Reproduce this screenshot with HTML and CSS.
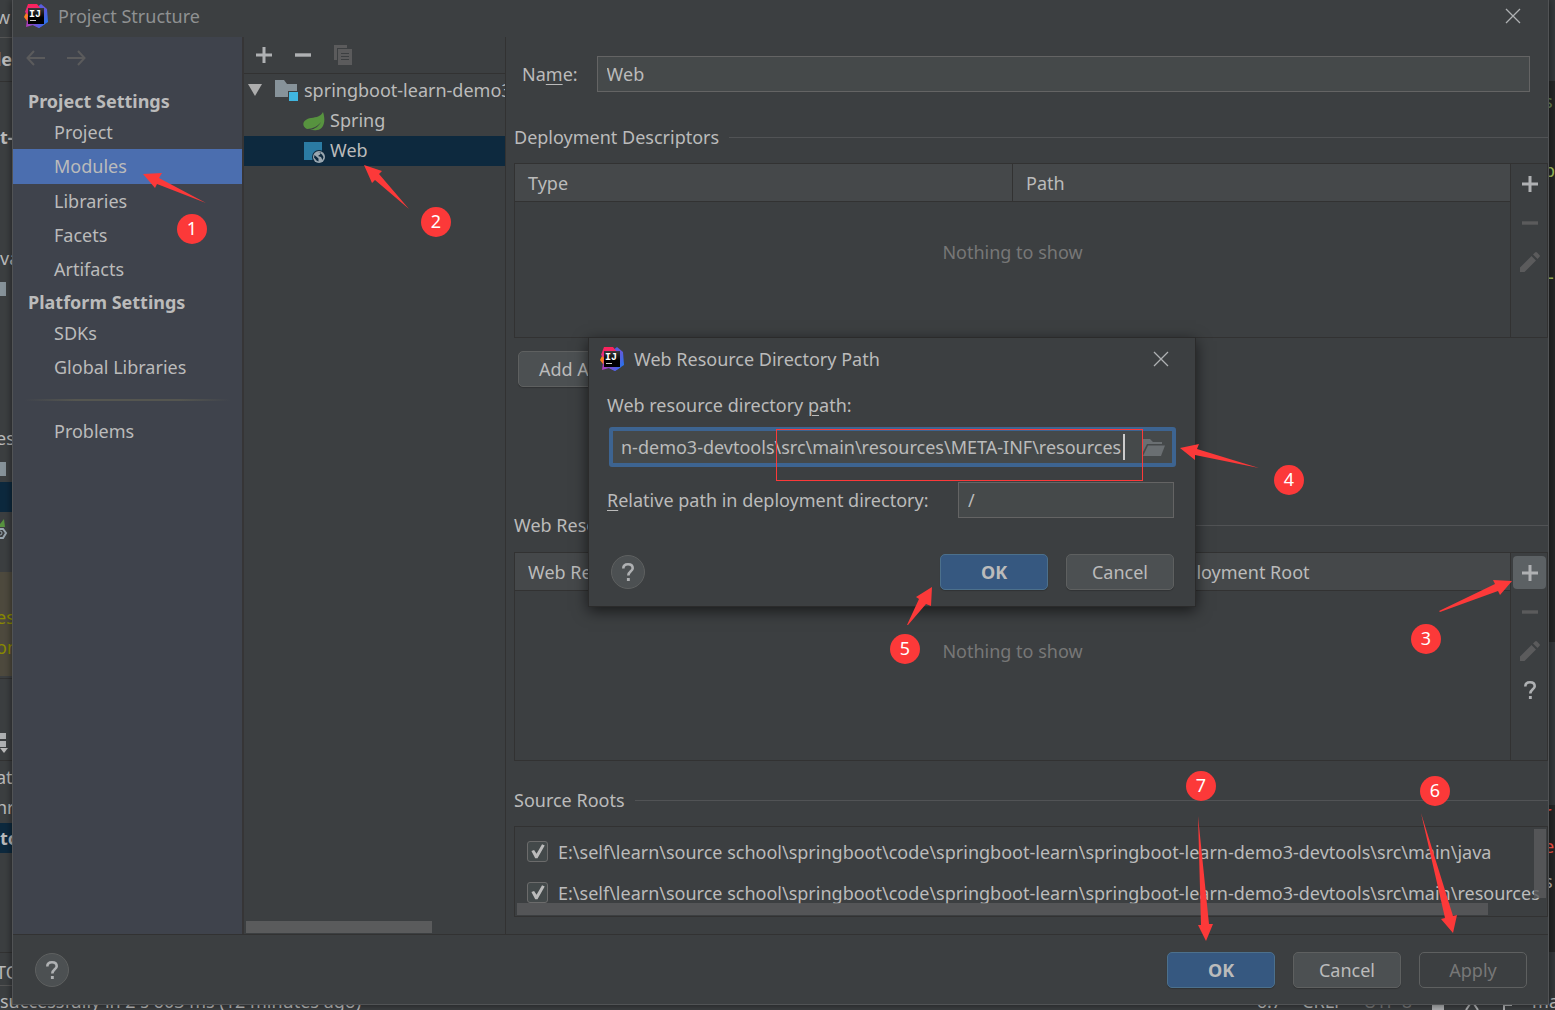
FILE: index.html
```html
<!DOCTYPE html>
<html lang="en">
<head>
<meta charset="utf-8">
<title>Project Structure</title>
<link rel="stylesheet" href="styles.css">
</head>
<body>
<svg class="defs" aria-hidden="true">
  <linearGradient id="g-pink" x1="0" y1="0" x2="0" y2="1"><stop offset="0" stop-color="#ff2157"/><stop offset="1" stop-color="#c23aa8"/></linearGradient>
  <linearGradient id="g-blue" x1="0" y1="0" x2="1" y2="1"><stop offset="0" stop-color="#2f6bf0"/><stop offset=".45" stop-color="#6a57d8"/><stop offset="1" stop-color="#127cf3"/></linearGradient>
  <linearGradient id="g-low" x1="0" y1="0" x2="1" y2="0"><stop offset="0" stop-color="#b33ab5"/><stop offset="1" stop-color="#2c6bf2"/></linearGradient>
  <linearGradient id="g-face" x1="0" y1="0" x2="0" y2="1"><stop offset="0" stop-color="#3a3a3c"/><stop offset=".6" stop-color="#000"/></linearGradient>
  <symbol id="logo" viewBox="0 0 24 24">
    <path fill="url(#g-blue)" d="M12 4 17 0l6 5 1 13-9 6-6-3z"/>
    <path fill="url(#g-low)" d="M3 16 2 23l7-2 6 3 6-4-6-4z"/>
    <path fill="#fc801d" d="M2 9 0 13l3 4 4-1V8z"/>
    <path fill="url(#g-pink)" d="M4 0h9l4 5-6 5-8 7 1-6-3-3z"/>
    <path fill="url(#g-face)" d="M4 4h16v16H4z"/>
    <text x="5" y="13" class="logo-text">IJ</text>
    <path fill="#ccc" d="M6 16h6v1H6z"/>
  </symbol>
  <symbol id="plus" viewBox="0 0 16 16"><path fill="currentColor" d="M6.500 0h3v6.500H16v3H9.500V16h-3V9.500H0v-3h6.500z"/></symbol>
  <symbol id="minus" viewBox="0 0 16 16"><path fill="currentColor" d="M0 6.300h16v3.400H0z"/></symbol>
  <symbol id="pencil" viewBox="0 0 20 20"><path fill="currentColor" d="M0 15.500 11.500 4l4.500 4.500L4.500 20H0zM13 2.500 15 .6q1-1 2 0L19.400 3q1 1 0 2l-1.900 2z"/></symbol>
  <symbol id="close" viewBox="0 0 16 16"><path fill="none" stroke="currentColor" stroke-width="1.300" d="m1 1 14 14M15 1 1 15"/></symbol>
  <symbol id="question" viewBox="0 0 12 18"><path fill="none" stroke="currentColor" stroke-width="2.600" d="M1.300 5.500C1.300 2.700 3.200 1.300 6 1.300s4.700 1.500 4.700 3.900C10.700 8.300 6.300 8.300 6.300 12.500"/><path fill="currentColor" d="M4.900 15h2.900v3H4.900z"/></symbol>
</svg>

<div class="ide" aria-hidden="true">
  <div class="edge edge-left">
    <i class="rule r37"></i><i class="rule r81"></i><i class="rule r678"></i><i class="rule r760"></i><i class="rule r952"></i><i class="rule r985"></i>
    <i class="sel s482"></i><i class="warn"></i><i class="sel s823"></i>
    <i class="chip c282"></i><i class="chip c462"></i><i class="chip c733"></i><i class="chip c742"></i>
    <svg class="bean" viewBox="0 0 8 22"><path fill="#57933f" d="M0 5 4 0l1 8H0z"/><path fill="none" stroke="#9aa7b0" stroke-width="2" d="M0 10h3l3 4-3 5H0"/><circle cx="0" cy="14" r="2" fill="none" stroke="#9aa7b0"/></svg>
    <svg class="caret-down" viewBox="0 0 8 5"><path fill="#bbb" d="M0 0h8L4 5z"/></svg>
    <span class="t t5">w</span><span class="t t47"><b>le</b></span><span class="t in t126"><b>t-</b></span><span class="t in t246">va</span><span class="t t426">esc</span>
    <span class="t t605 olive">es</span><span class="t t635 olive">on</span><span class="t t765">at</span><span class="t t795">nr</span><span class="t in t826"><b>to</b></span><span class="t t960">TO</span>
  </div>
  <div class="edge edge-right">
    <i class="editor e81"></i><i class="editor e805"></i>
    <span class="t t90 green">s</span><span class="t t158 lime">p</span><span class="t t260 lime">L</span>
    <span class="t t800 red">r</span><span class="t t834 red">e</span><span class="t t869">s</span>
  </div>
  <div class="status">
    <span class="msg">successfully in 2 s 603 ms (12 minutes ago)</span>
    <span>6:7</span><span>CRLF</span><span class="dim">UTF-8</span>
    <svg width="12" height="18" viewBox="0 0 12 18"><path fill="#afb1b3" d="M0 8h12v10H0z"/></svg>
    <svg width="16" height="18" viewBox="0 0 16 18"><path fill="none" stroke="#afb1b3" stroke-width="2" d="M2 18 6 12h4l4 6M4 8h8"/></svg>
    <svg width="12" height="18" viewBox="0 0 12 18"><path fill="none" stroke="#afb1b3" stroke-width="2" d="M4 18V4M4 13h8"/></svg>
    <span>ma</span>
  </div>
</div>

<main class="window">
  <header class="titlebar">
    <svg class="logo"><use href="#logo"/></svg>
    <h1>Project Structure</h1>
    <button class="close" aria-label="Close"><svg><use href="#close"/></svg></button>
  </header>

  <div class="panes">
    <aside class="sidebar">
      <nav class="history">
        <button aria-label="Back" disabled><svg viewBox="0 0 20 16"><path d="M19 8H2M8 1 1.500 8 8 15"/></svg></button>
        <button aria-label="Forward" disabled><svg viewBox="0 0 20 16"><path d="M1 8h17M12 1l6.500 7L12 15"/></svg></button>
      </nav>
      <nav class="sections">
        <h2>Project Settings</h2>
        <a href="#project">Project</a>
        <a href="#modules" class="current">Modules</a>
        <a href="#libraries">Libraries</a>
        <a href="#facets">Facets</a>
        <a href="#artifacts">Artifacts</a>
        <h2>Platform Settings</h2>
        <a href="#sdks">SDKs</a>
        <a href="#global">Global Libraries</a>
        <hr>
        <a href="#problems">Problems</a>
      </nav>
    </aside>

    <section class="modules">
      <div class="toolbar">
        <button aria-label="Add"><svg class="i16"><use href="#plus"/></svg></button>
        <button aria-label="Remove"><svg class="i16"><use href="#minus"/></svg></button>
        <button aria-label="Copy" disabled><svg class="copy" viewBox="0 0 18 20"><path fill="currentColor" d="M0 0h13v3H3v12H0z"/><path fill="currentColor" d="M4 4h14v16H4z"/><path stroke="#3c3f41" d="M7 8.500h8M7 11.500h8M7 14.500h8"/></svg></button>
      </div>
      <ul class="tree">
        <li class="root"><svg class="twisty" viewBox="0 0 14 12"><path fill="#adadad" d="M0 0h14L7 12z"/></svg><svg class="folder" viewBox="0 0 24 22"><path fill="#87939a" d="M0 1h9l3 4h10v7h-9v6H0z"/><path fill="#40b6e0" d="M14 13h9v9h-9z"/></svg>springboot-learn-demo3-devtools</li>
        <li><svg class="facet" viewBox="0 0 22 20"><path fill="#57933f" d="M20 0c3 9 1 17-6 18-2 .5-5 0-7 0 5-1 9-4 11-8-3 4-8 7-14 7C-3 13 1 7 8 6c6-1 9-1 12-6z"/></svg>Spring</li>
        <li class="selected"><svg class="facet" viewBox="0 0 22 22"><path fill="#2b7ba3" d="M1 1h18v18H1z"/><circle cx="16" cy="16" r="7" fill="#0d293e"/><circle cx="16" cy="16" r="6" fill="#9aa7b0"/><path fill="#0d293e" d="m11.500 14 4 3.500v3l-2-1-2.500-3zM15 12l3-.5-1 2-2 1.500 3 1 1.500 3 1-3-1.500-2.500L17 12z"/></svg>Web</li>
      </ul>
      <i class="thumb"></i>
    </section>

    <section class="detail">
      <div class="name">
        <label for="name">Na<u>m</u>e:</label>
        <input id="name" value="Web">
      </div>

      <h3 class="group">Deployment Descriptors</h3>
      <div class="grid descriptors">
        <table>
          <thead><tr><th>Type</th><th>Path</th></tr></thead>
          <tbody><tr><td colspan="2">Nothing to show</td></tr></tbody>
        </table>
        <div class="tools">
          <button aria-label="Add"><svg class="i16"><use href="#plus"/></svg></button>
          <button aria-label="Remove" disabled><svg class="i16"><use href="#minus"/></svg></button>
          <button aria-label="Edit" disabled><svg class="i20"><use href="#pencil"/></svg></button>
        </div>
      </div>
      <button class="btn wide">Add Application Server specific descriptor...</button>

      <h3 class="group resources-title">Web Resource Directories</h3>
      <div class="grid resources">
        <table>
          <thead><tr><th>Web Resource Directory</th><th>Path Relative to Deployment Root</th></tr></thead>
          <tbody><tr><td colspan="2">Nothing to show</td></tr></tbody>
        </table>
        <div class="tools">
          <button class="hover" aria-label="Add"><svg class="i16"><use href="#plus"/></svg></button>
          <button aria-label="Remove" disabled><svg class="i16"><use href="#minus"/></svg></button>
          <button aria-label="Edit" disabled><svg class="i20"><use href="#pencil"/></svg></button>
          <button aria-label="Help"><svg class="q"><use href="#question"/></svg></button>
        </div>
      </div>

      <h3 class="group roots-title">Source Roots</h3>
      <div class="roots">
        <label><input type="checkbox" checked>E:\self\learn\source school\springboot\code\springboot-learn\springboot-learn-demo3-devtools\src\main\java</label>
        <label><input type="checkbox" checked>E:\self\learn\source school\springboot\code\springboot-learn\springboot-learn-demo3-devtools\src\main\resources</label>
        <i class="vthumb"></i><i class="hthumb"></i>
      </div>
    </section>
  </div>

  <footer class="actions">
    <button class="help" aria-label="Help"><svg class="q"><use href="#question"/></svg></button>
    <button class="btn primary">OK</button>
    <button class="btn">Cancel</button>
    <button class="btn" disabled>Apply</button>
  </footer>
</main>

<div class="dialog" role="dialog" aria-labelledby="dlg-title">
  <header>
    <svg class="logo"><use href="#logo"/></svg>
    <h2 id="dlg-title">Web Resource Directory Path</h2>
    <button class="close" aria-label="Close"><svg><use href="#close"/></svg></button>
  </header>
  <label class="path-label" for="path">Web resource directory <u>p</u>ath:</label>
  <div class="path">
    <input id="path" value="n-demo3-devtools\src\main\resources\META-INF\resources"><i class="caret"></i>
    <button aria-label="Browse"><svg viewBox="0 0 22 17"><path fill="#6a6f72" d="M0 0h7l3 3h9v2H4L0 13z"/><path fill="#6a6f72" d="M5 6.500h17L18 17H0z"/></svg></button>
  </div>
  <div class="relative">
    <label for="rel"><u>R</u>elative path in deployment directory:</label>
    <input id="rel" value="/">
  </div>
  <footer>
    <button class="help" aria-label="Help"><svg class="q"><use href="#question"/></svg></button>
    <button class="btn primary">OK</button>
    <button class="btn">Cancel</button>
  </footer>
</div>

<div class="notes">
  <svg class="arrows">
    <rect x="776.500" y="429.500" width="366" height="51"/>
    <path d="m143 174 19-1-3 5 47 25-49-19-2 4z"/>
    <path d="m364 165 18 6-3 3 30 35-34-29-3 3z"/>
    <path d="m1512 581-19-1 2 4-56 27 1 1 58-21 2 4z"/>
    <path d="m1180 448 19-4-2 5 62 19-64-13v5z"/>
    <path d="m932 587-16 10 3 2-12 26h1l18-21 5 2z"/>
    <path d="m1453 933-12-14 4-1-24-105 32 103 4-1z"/>
    <path d="m1206 941-8-16h3l-3-109 11 108h4z"/>
  </svg>
  <span class="n1">1</span><span class="n2">2</span><span class="n3">3</span><span class="n4">4</span><span class="n5">5</span><span class="n6">6</span><span class="n7">7</span>
</div>
</body>
</html>
```
FILE: styles.css
```css
* { box-sizing: border-box; }

body {
  margin: 0;
  position: relative;
  min-height: 100vh;
  display: flex;
  overflow: hidden;
  background: #3c3f41;
  color: #bbb;
  font: 18px/24px "Noto Sans", "Noto Sans CJK SC", sans-serif;
}

h1, h2, h3, ul { margin: 0; padding: 0; font: inherit; list-style: none; }
button, input { font: inherit; color: inherit; margin: 0; }
button { padding: 0; border: 0; background: none; }
svg { display: block; flex: none; }
i { display: block; }
u { text-decoration-thickness: 1px; text-underline-offset: 3px; }
.defs { position: absolute; width: 0; height: 0; }
.logo { width: 24px; height: 24px; }
.logo-text { font: bold 10px "Liberation Mono", monospace; fill: #fff; }
.i16 { width: 16px; height: 16px; }
.i20 { width: 20px; height: 20px; }
.q { width: 12px; height: 18px; }

/* IDE frame that shows around the window */
.ide { position: absolute; inset: 0; }
.edge { position: absolute; top: 0; bottom: 0; overflow: hidden; }
.edge-left { left: 0; width: 13px; }
.edge-right { right: 0; width: 7px; background: #36393b; }
.edge i, .edge .t, .edge svg { position: absolute; left: 0; }
.edge .t { left: -4px; white-space: nowrap; }
.edge .in { left: 0; }
.rule { width: 100%; height: 1px; background: #555; }
.sel { width: 100%; height: 30px; background: #0d293e; }
.chip { width: 6px; height: 14px; background: #87939a; }
.warn { top: 572px; width: 100%; height: 104px; background: #4e4a3e; }
.bean { top: 519px; width: 8px; height: 22px; }
.caret-down { top: 748px; width: 8px; height: 5px; }
.editor { width: 100%; background: #262727; }
.e81 { top: 81px; height: 561px; }
.e805 { top: 805px; height: 147px; }
.r37 { top: 37px; } .r81 { top: 81px; background: #323232; } .r678 { top: 678px; background: #323232; }
.r760 { top: 760px; background: #323232; } .r952 { top: 952px; background: #323232; } .r985 { top: 985px; }
.s482 { top: 482px; } .s823 { top: 823px; }
.c282 { top: 282px; } .c462 { top: 462px; }
.c733 { top: 733px; height: 6px; background: #afb1b3; } .c742 { top: 741px; height: 6px; background: #afb1b3; }
.t5 { top: 5px; } .t47 { top: 47px; } .t126 { top: 125px; } .t246 { top: 246px; } .t426 { top: 426px; }
.t605 { top: 605px; } .t635 { top: 635px; } .t765 { top: 765px; } .t795 { top: 795px; } .t826 { top: 826px; } .t960 { top: 960px; }
.t90 { top: 89px; } .t158 { top: 158px; } .t260 { top: 260px; } .t800 { top: 800px; } .t834 { top: 834px; } .t869 { top: 869px; }
.olive { color: #8a8a00; } .green { color: #6a8759; } .lime { color: #a5c261; } .red { color: #ff5647; }
.status {
  position: absolute; left: 0; right: -4px; bottom: -3px;
  display: flex; align-items: center; gap: 20px; white-space: nowrap; overflow: hidden;
}
.status .msg { flex: 1; }
.dim { color: #777; }

/* Main window */
.window {
  position: relative;
  flex: 1;
  min-width: 0;
  margin: 0 6px 5px 12px;
  display: flex;
  flex-direction: column;
  background: #3c3f41;
  border: solid #515355;
  border-width: 0 1px 1px;
  box-shadow: 0 0 8px #0008;
}
.titlebar { display: flex; align-items: center; gap: 10px; height: 37px; padding: 0 25px 5px 11px; color: #8f9192; }
.titlebar h1 { flex: 1; }
.close { width: 20px; height: 20px; display: grid; place-items: center; color: #afb1b3; }
.close svg { width: 16px; height: 16px; }
.panes { flex: 1; display: flex; min-height: 0; }

.sidebar { width: 231px; background: #3f434c; border-right: 2px solid #363536; }
.history { display: flex; gap: 20px; height: 42px; padding-left: 13px; align-items: center; }
.history svg { width: 20px; height: 16px; fill: none; stroke: #5b5b5c; stroke-width: 2; }
.sections { padding-top: 6px; }
.sections h2 { height: 30px; padding: 4px 15px; font-weight: bold; }
.sections a { display: block; height: 34px; padding: 5px 41px; color: inherit; text-decoration: none; }
.sections a.current { height: 35px; background: #4b6eaf; }
.sections hr { height: 2px; margin: 15px 11px 13px; border: 0; background: linear-gradient(90deg, transparent, #555650 25%, #555650 75%, transparent); }

.modules { width: 262px; border-right: 1px solid #323232; display: flex; flex-direction: column; overflow: hidden; }
.toolbar { display: flex; align-items: center; gap: 23px; height: 37px; padding-left: 12px; border-bottom: 1px solid #323232; color: #afb1b3; }
button:disabled { color: #5b5b5c; }
.copy { width: 18px; height: 20px; }
.tree { flex: 1; padding-top: 2px; white-space: nowrap; }
.tree li { display: flex; align-items: center; gap: 5px; height: 30px; padding: 0 0 2px 59px; }
.tree .root { padding-left: 4px; }
.tree .selected { background: #0d293e; }
.twisty { width: 14px; height: 12px; margin-right: 8px; }
.folder { width: 24px; height: 22px; }
.facet { width: 22px; height: 22px; margin-top: 4px; }
.thumb { width: 186px; height: 12px; margin: 0 0 1px 2px; background: #5a5b5c; }

.detail { flex: 1; min-width: 0; padding: 19px 0 17px 8px; }
.name { display: flex; align-items: center; gap: 19px; padding: 0 18px 0 8px; }
.name input { flex: 1; min-width: 0; }
.name input, .relative input { height: 36px; padding: 0 9px; border: 1px solid #646464; background: #45494a; }
.group { display: flex; align-items: center; gap: 10px; margin: 33px 0 14px; white-space: nowrap; }
.group::after { content: ""; flex: 1; height: 1px; background: #515355; }
.group.resources-title { margin: 126px 0 15px; }
.group.roots-title { margin-top: 27px; }
.grid { display: flex; border: 1px solid #323232; }
.descriptors { height: 175px; }
.resources { height: 209px; }
.grid table { width: 100%; border-collapse: collapse; table-layout: fixed; }
.grid th { height: 37px; padding: 1px 13px 0; font-weight: normal; text-align: left; background: #45484a; border-bottom: 1px solid #323232; white-space: nowrap; }
.descriptors th + th { border-left: 1px solid #323232; }
.grid td { padding: 38px 0 0; vertical-align: top; text-align: center; color: #777; }
.resources td { padding-top: 48px; }
.tools { flex: none; width: 37px; padding: 3px 1px 3px 2px; border-left: 1px solid #323232; display: flex; flex-direction: column; align-items: center; gap: 6px; color: #afb1b3; }
.tools button { width: 33px; height: 33px; border-radius: 4px; display: grid; place-items: center; }
.tools .hover { background: #5c6164; }

.btn { min-width: 108px; height: 36px; padding: 0 20px; border: 1px solid #5e6060; border-radius: 5px; background: #4c5052; box-shadow: 0 1px 1px #0003; }
.btn.primary { background: #365880; border-color: #4c708c; font-weight: bold; }
.btn:disabled { background: none; color: #777; box-shadow: none; }
.btn.wide { display: block; margin: 13px 0 0 4px; }

.roots { position: relative; height: 91px; padding: 4px 0 0 12px; border: 1px solid #323232; overflow: hidden; }
.roots label { display: flex; align-items: center; gap: 10px; height: 41px; white-space: nowrap; }
.roots input { appearance: none; flex: none; width: 21px; height: 21px; border: 1px solid #6b6b6b; border-radius: 3px; background: #43494a; }
.roots input::after { content: ""; display: block; height: 100%; background: #bbb; clip-path: polygon(18% 48%, 32% 42%, 45% 62%, 74% 12%, 88% 18%, 50% 86%, 38% 86%); }
.vthumb, .hthumb { position: absolute; background: #5a5b5ccc; }
.vthumb { right: 1px; top: 2px; width: 12px; height: 69px; }
.hthumb { left: 2px; right: 59px; bottom: 1px; height: 12px; }

.actions { display: flex; align-items: center; gap: 18px; height: 70px; padding: 0 21px 0 22px; border-top: 1px solid #323232; }
.help { width: 34px; height: 34px; margin-right: auto; border: 1px solid #5e6060; border-radius: 50%; background: #4c5052; display: grid; place-items: center; color: #afb1b3; }

/* Path dialog, floating over the window */
.dialog {
  position: absolute; left: 588px; top: 337px; width: 608px;
  padding: 0 21px 16px 18px;
  background: #3c3f41; border: 1px solid #2b2b2b;
  box-shadow: 0 4px 14px #0009;
}
.dialog header { display: flex; align-items: center; gap: 10px; height: 42px; margin: 0 3px 0 -7px; }
.dialog h2 { flex: 1; }
.path-label { display: block; margin: 13px 0 10px; }
.path { display: flex; align-items: center; height: 40px; margin: 0 -2px 0 2px; padding-left: 8px; border: 4px solid #3d6491; border-radius: 3px; background: #45494a; }
.path input { width: 502px; padding: 0; border: 0; outline: 0; background: none; }
.path button { margin-left: auto; margin-right: 7px; }
.path svg { width: 22px; height: 17px; }
.caret { width: 2px; height: 26px; background: #ccc; }
.relative { display: flex; align-items: center; justify-content: space-between; margin-top: 15px; }
.relative input { width: 216px; }
.dialog footer { display: flex; align-items: center; gap: 18px; margin: 36px 0 0 4px; }

/* Numbered step markers */
.notes { position: absolute; inset: 0; pointer-events: none; }
.arrows { width: 100%; height: 100%; fill: #fc3939; }
.arrows rect { fill: none; stroke: #fc3939; }
.notes span { position: absolute; width: 30px; height: 30px; border-radius: 50%; background: #fc3939; color: #fff; text-align: center; line-height: 28px; }
.n1 { left: 177px; top: 214px; }
.n2 { left: 421px; top: 207px; }
.n3 { left: 1411px; top: 624px; }
.n4 { left: 1274px; top: 465px; }
.n5 { left: 890px; top: 634px; }
.n6 { left: 1420px; top: 776px; }
.n7 { left: 1186px; top: 771px; }
```
